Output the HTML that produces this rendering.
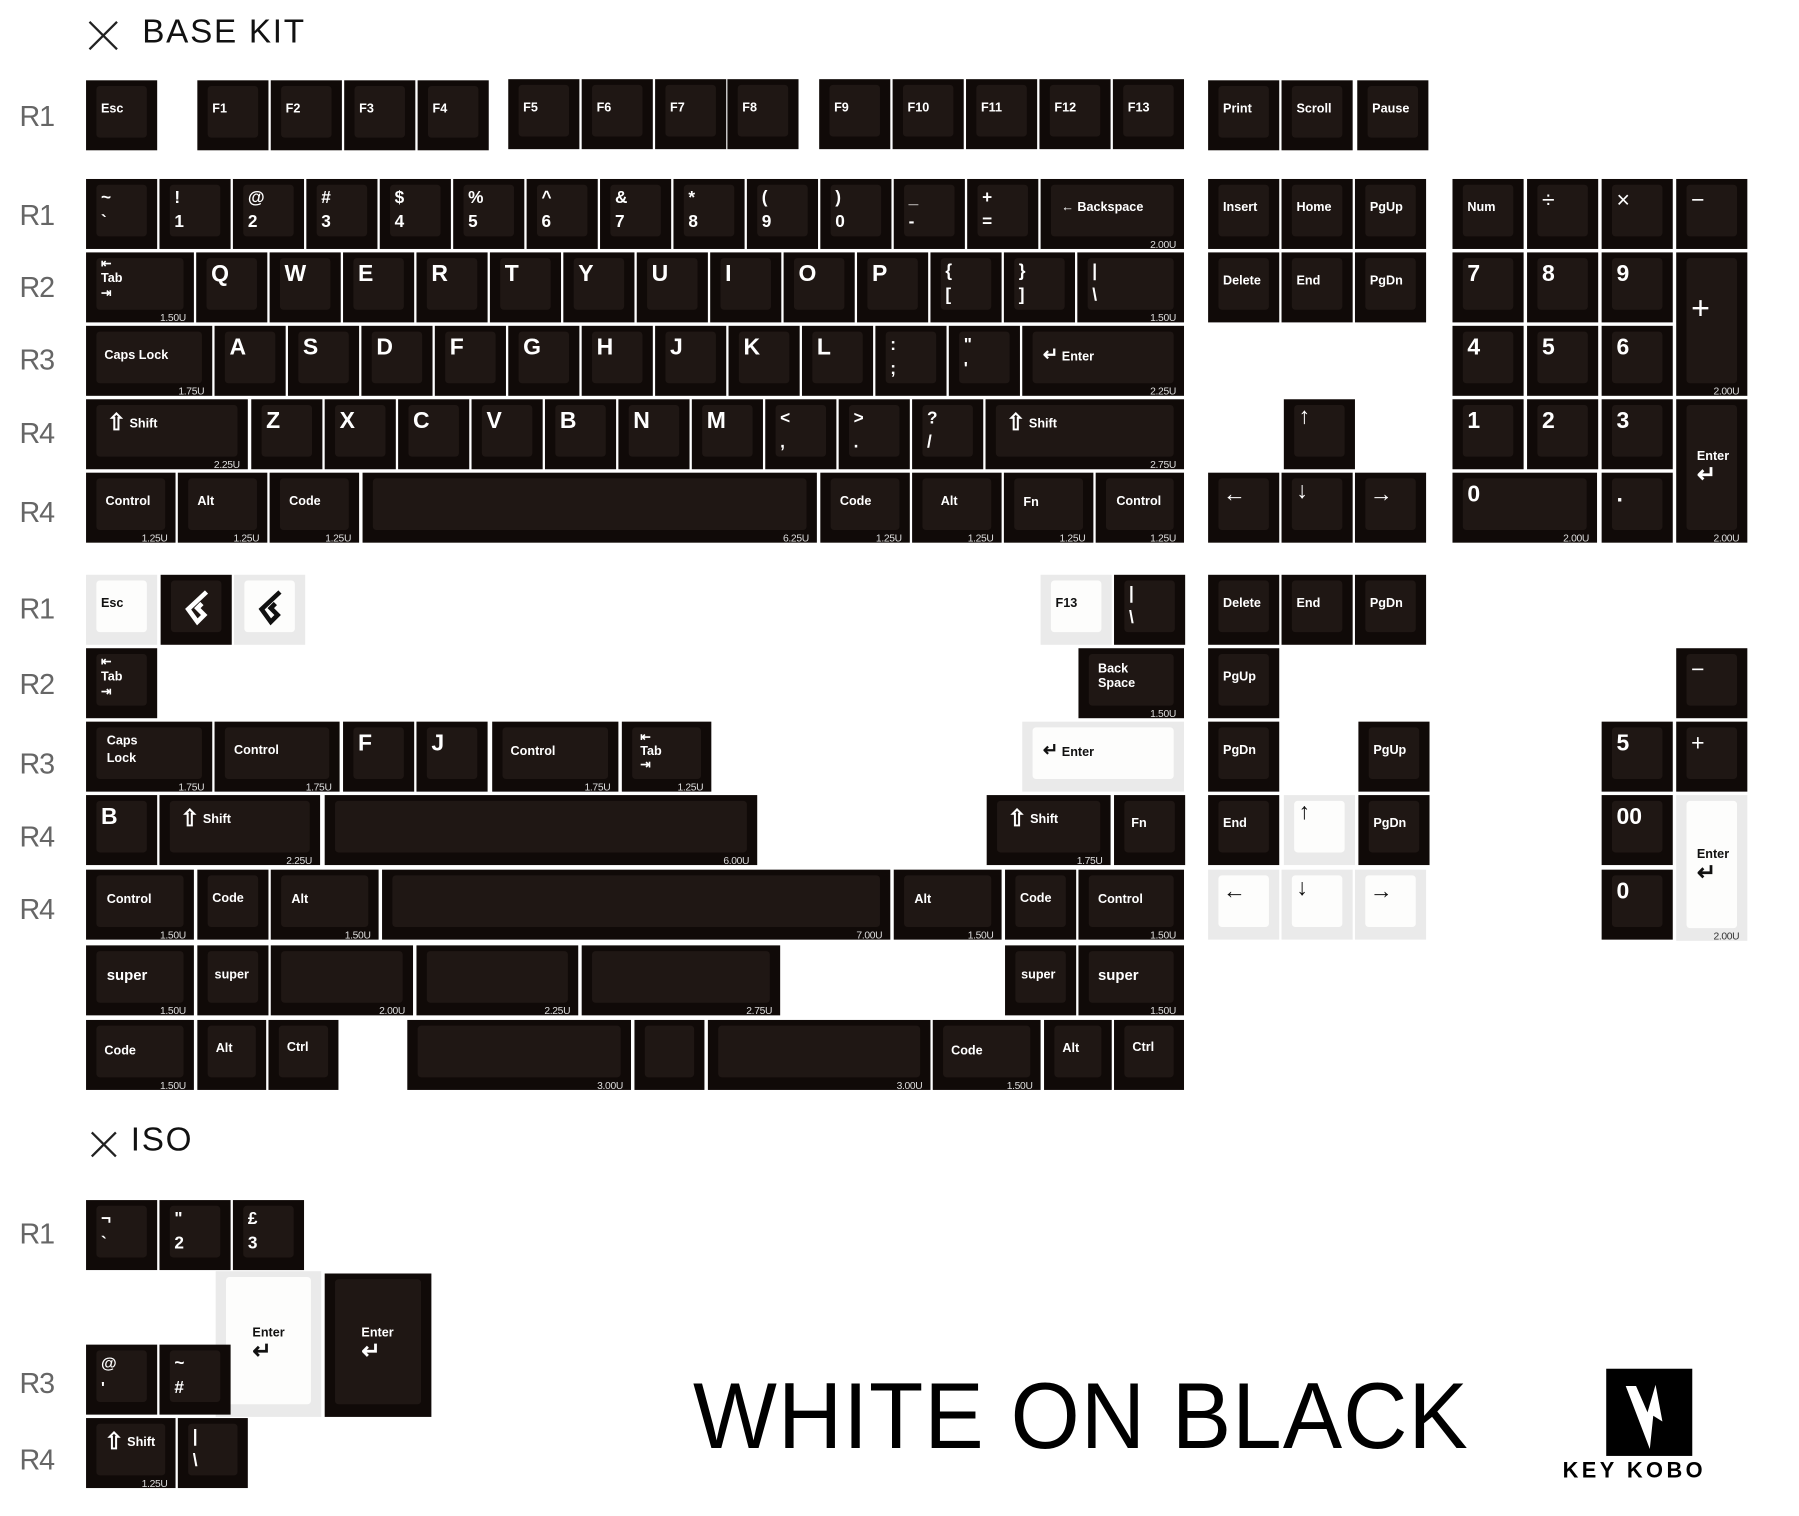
<!DOCTYPE html>
<html><head><meta charset="utf-8"><style>
html,body{margin:0;padding:0;background:#fff;overflow:hidden}
#c{position:relative;width:1568px;height:1322px;transform:scale(1.1473);transform-origin:0 0;font-family:"Liberation Sans",sans-serif}
.k{position:absolute;width:62px;height:61px;background:#100a08;color:#fff;font-weight:bold}
.k:before{content:"";position:absolute;left:9px;top:5px;right:9px;bottom:11px;background:#1f1714;border-radius:3px}
.w{background:#eaeaea;color:#111}
.w:before{background:#fdfdfc}
.k span{position:absolute;left:13px;top:19px;font-size:11px;white-space:nowrap;line-height:13px}
.k .a{font-size:20px;top:8px;left:13px;line-height:22px}
.k .d{font-size:15px;top:6px;line-height:21px}
.k u{position:absolute;right:7px;bottom:-1px;font-size:9px;font-weight:normal;text-decoration:none;color:#ddd;letter-spacing:-.3px}
.l{position:absolute;left:17px;font-size:25px;color:#666;font-weight:normal;letter-spacing:-1px}
.t{position:absolute;font-size:29px;letter-spacing:1.5px;color:#111}
</style></head><body><div id="c">
<svg style="position:absolute;left:76px;top:17px" width="28" height="28"><path d="M2 2L26 26M26 2L2 26" stroke="#222" stroke-width="2"/></svg>
<div class="t" style="left:124px;top:12px">BASE KIT</div>
<div class="l" style="top:88px">R1</div><div class="l" style="top:174px">R1</div><div class="l" style="top:237px">R2</div><div class="l" style="top:300px">R3</div><div class="l" style="top:364px">R4</div><div class="l" style="top:433px">R4</div>
<div class="l" style="top:517px">R1</div><div class="l" style="top:583px">R2</div><div class="l" style="top:652px">R3</div><div class="l" style="top:716px">R4</div><div class="l" style="top:779px">R4</div>
<div class="l" style="top:1062px">R1</div><div class="l" style="top:1192px">R3</div><div class="l" style="top:1259px">R4</div>

<!-- F row -->
<div class="k" style="left:75px;top:70px"><span>Esc</span></div>
<div class="k" style="left:172px;top:70px"><span>F1</span></div><div class="k" style="left:236px;top:70px"><span>F2</span></div><div class="k" style="left:300px;top:70px"><span>F3</span></div><div class="k" style="left:364px;top:70px"><span>F4</span></div>
<div class="k" style="left:443px;top:69px"><span>F5</span></div><div class="k" style="left:507px;top:69px"><span>F6</span></div><div class="k" style="left:571px;top:69px"><span>F7</span></div><div class="k" style="left:634px;top:69px"><span>F8</span></div>
<div class="k" style="left:714px;top:69px"><span>F9</span></div><div class="k" style="left:778px;top:69px"><span>F10</span></div><div class="k" style="left:842px;top:69px"><span>F11</span></div><div class="k" style="left:906px;top:69px"><span>F12</span></div><div class="k" style="left:970px;top:69px"><span>F13</span></div>
<div class="k" style="left:1053px;top:70px"><span>Print</span></div><div class="k" style="left:1117px;top:70px"><span>Scroll</span></div><div class="k" style="left:1183px;top:70px"><span>Pause</span></div>

<!-- row 1 -->
<div class="k" style="left:75px;top:156px"><span class="d">~<br>`</span></div>
<div class="k" style="left:139px;top:156px"><span class="d">!<br>1</span></div>
<div class="k" style="left:203px;top:156px"><span class="d">@<br>2</span></div>
<div class="k" style="left:267px;top:156px"><span class="d">#<br>3</span></div>
<div class="k" style="left:331px;top:156px"><span class="d">$<br>4</span></div>
<div class="k" style="left:395px;top:156px"><span class="d">%<br>5</span></div>
<div class="k" style="left:459px;top:156px"><span class="d">^<br>6</span></div>
<div class="k" style="left:523px;top:156px"><span class="d">&amp;<br>7</span></div>
<div class="k" style="left:587px;top:156px"><span class="d">*<br>8</span></div>
<div class="k" style="left:651px;top:156px"><span class="d">(<br>9</span></div>
<div class="k" style="left:715px;top:156px"><span class="d">)<br>0</span></div>
<div class="k" style="left:779px;top:156px"><span class="d">_<br>-</span></div>
<div class="k" style="left:843px;top:156px"><span class="d">+<br>=</span></div>
<div class="k" style="left:907px;top:156px;width:125px"><span style="left:18px">&#8592; Backspace</span><u>2.00U</u></div>
<div class="k" style="left:1053px;top:156px"><span>Insert</span></div><div class="k" style="left:1117px;top:156px"><span>Home</span></div><div class="k" style="left:1181px;top:156px"><span>PgUp</span></div>
<div class="k" style="left:1266px;top:156px"><span>Num</span></div><div class="k" style="left:1331px;top:156px"><span class="a" style="font-weight:normal">&#247;</span></div><div class="k" style="left:1396px;top:156px"><span class="a" style="font-weight:normal">&#215;</span></div><div class="k" style="left:1461px;top:156px"><span class="a" style="font-weight:normal">&#8722;</span></div>

<!-- row 2 -->
<div class="k" style="left:75px;top:220px;width:94px"><span style="top:4px;line-height:13px">&#8676;<br>Tab<br>&#8677;</span><u>1.50U</u></div>
<div class="k" style="left:171px;top:220px"><span class="a">Q</span></div><div class="k" style="left:235px;top:220px"><span class="a">W</span></div><div class="k" style="left:299px;top:220px"><span class="a">E</span></div><div class="k" style="left:363px;top:220px"><span class="a">R</span></div><div class="k" style="left:427px;top:220px"><span class="a">T</span></div><div class="k" style="left:491px;top:220px"><span class="a">Y</span></div><div class="k" style="left:555px;top:220px"><span class="a">U</span></div><div class="k" style="left:619px;top:220px"><span class="a">I</span></div><div class="k" style="left:683px;top:220px"><span class="a">O</span></div><div class="k" style="left:747px;top:220px"><span class="a">P</span></div>
<div class="k" style="left:811px;top:220px"><span class="d">{<br>[</span></div><div class="k" style="left:875px;top:220px"><span class="d">}<br>]</span></div>
<div class="k" style="left:939px;top:220px;width:93px"><span class="d">|<br>\</span><u>1.50U</u></div>
<div class="k" style="left:1053px;top:220px"><span>Delete</span></div><div class="k" style="left:1117px;top:220px"><span>End</span></div><div class="k" style="left:1181px;top:220px"><span>PgDn</span></div>
<div class="k" style="left:1266px;top:220px"><span class="a">7</span></div><div class="k" style="left:1331px;top:220px"><span class="a">8</span></div><div class="k" style="left:1396px;top:220px"><span class="a">9</span></div>
<div class="k" style="left:1461px;top:220px;height:125px"><span class="a" style="top:38px;font-size:28px;font-weight:normal">+</span><u>2.00U</u></div>

<!-- row 3 -->
<div class="k" style="left:75px;top:284px;width:110px"><span style="left:16px;top:20px">Caps Lock</span><u>1.75U</u></div>
<div class="k" style="left:187px;top:284px"><span class="a">A</span></div><div class="k" style="left:251px;top:284px"><span class="a">S</span></div><div class="k" style="left:315px;top:284px"><span class="a">D</span></div><div class="k" style="left:379px;top:284px"><span class="a">F</span></div><div class="k" style="left:443px;top:284px"><span class="a">G</span></div><div class="k" style="left:507px;top:284px"><span class="a">H</span></div><div class="k" style="left:571px;top:284px"><span class="a">J</span></div><div class="k" style="left:635px;top:284px"><span class="a">K</span></div><div class="k" style="left:699px;top:284px"><span class="a">L</span></div>
<div class="k" style="left:763px;top:284px"><span class="d">:<br>;</span></div><div class="k" style="left:827px;top:284px"><span class="d">"<br>'</span></div>
<div class="k" style="left:891px;top:284px;width:141px"><span style="left:18px"><b style="font-size:16px">&#8629;</b> Enter</span><u>2.25U</u></div>
<div class="k" style="left:1266px;top:284px"><span class="a">4</span></div><div class="k" style="left:1331px;top:284px"><span class="a">5</span></div><div class="k" style="left:1396px;top:284px"><span class="a">6</span></div>

<!-- row 4 -->
<div class="k" style="left:75px;top:348px;width:141px"><span style="left:18px;top:15px;font-size:11px"><b style="font-size:20px;vertical-align:middle">&#8679;</b> Shift</span><u>2.25U</u></div>
<div class="k" style="left:219px;top:348px"><span class="a">Z</span></div><div class="k" style="left:283px;top:348px"><span class="a">X</span></div><div class="k" style="left:347px;top:348px"><span class="a">C</span></div><div class="k" style="left:411px;top:348px"><span class="a">V</span></div><div class="k" style="left:475px;top:348px"><span class="a">B</span></div><div class="k" style="left:539px;top:348px"><span class="a">N</span></div><div class="k" style="left:603px;top:348px"><span class="a">M</span></div>
<div class="k" style="left:667px;top:348px"><span class="d">&lt;<br>,</span></div><div class="k" style="left:731px;top:348px"><span class="d">&gt;<br>.</span></div><div class="k" style="left:795px;top:348px"><span class="d">?<br>/</span></div>
<div class="k" style="left:859px;top:348px;width:173px"><span style="left:18px;top:15px"><b style="font-size:20px;vertical-align:middle">&#8679;</b> Shift</span><u>2.75U</u></div>
<div class="k" style="left:1119px;top:348px"><span class="a" style="top:4px">&#8593;</span></div>
<div class="k" style="left:1266px;top:348px"><span class="a">1</span></div><div class="k" style="left:1331px;top:348px"><span class="a">2</span></div><div class="k" style="left:1396px;top:348px"><span class="a">3</span></div>
<div class="k" style="left:1461px;top:348px;height:125px"><span style="left:18px;top:42px;line-height:16px">Enter<br><b style="font-size:20px">&#8629;</b></span><u>2.00U</u></div>

<!-- row 5 -->
<div class="k" style="left:75px;top:412px;width:78px"><span style="left:17px">Control</span><u>1.25U</u></div>
<div class="k" style="left:155px;top:412px;width:78px"><span style="left:17px">Alt</span><u>1.25U</u></div>
<div class="k" style="left:235px;top:412px;width:78px"><span style="left:17px">Code</span><u>1.25U</u></div>
<div class="k" style="left:316px;top:412px;width:396px"><u>6.25U</u></div>
<div class="k" style="left:715px;top:412px;width:78px"><span style="left:17px">Code</span><u>1.25U</u></div>
<div class="k" style="left:795px;top:412px;width:78px"><span style="left:25px">Alt</span><u>1.25U</u></div>
<div class="k" style="left:875px;top:412px;width:78px"><span style="left:17px;top:20px">Fn</span><u>1.25U</u></div>
<div class="k" style="left:955px;top:412px;width:77px"><span style="left:18px">Control</span><u>1.25U</u></div>
<div class="k" style="left:1053px;top:412px"><span class="a">&#8592;</span></div><div class="k" style="left:1117px;top:412px"><span class="a" style="top:5px">&#8595;</span></div><div class="k" style="left:1181px;top:412px"><span class="a">&#8594;</span></div>
<div class="k" style="left:1266px;top:412px;width:126px"><span class="a">0</span><u>2.00U</u></div>
<div class="k" style="left:1396px;top:412px"><span class="a">.</span></div>

<!-- section 2 -->
<div class="k w" style="left:75px;top:501px"><span>Esc</span></div>
<div class="k" style="left:140px;top:501px"><svg style="position:absolute;left:18px;top:13px" width="28" height="32"><path d="M22 2L6 17L14 28L20 22L14 16L18 12" fill="none" stroke="#fff" stroke-width="4"/></svg></div>
<div class="k w" style="left:204px;top:501px"><svg style="position:absolute;left:18px;top:13px" width="28" height="32"><path d="M22 2L6 17L14 28L20 22L14 16L18 12" fill="none" stroke="#111" stroke-width="4"/></svg></div>
<div class="k w" style="left:907px;top:501px"><span>F13</span></div>
<div class="k" style="left:971px;top:501px"><span class="d">|<br>\</span></div>
<div class="k" style="left:1053px;top:501px"><span>Delete</span></div><div class="k" style="left:1117px;top:501px"><span>End</span></div><div class="k" style="left:1181px;top:501px"><span>PgDn</span></div>

<div class="k" style="left:75px;top:565px"><span style="top:6px">&#8676;<br>Tab<br>&#8677;</span></div>
<div class="k" style="left:940px;top:565px;width:92px"><span style="left:17px;top:12px">Back<br>Space</span><u>1.50U</u></div>
<div class="k" style="left:1053px;top:565px"><span>PgUp</span></div>
<div class="k" style="left:1461px;top:565px"><span class="a" style="font-weight:normal">&#8722;</span></div>

<div class="k" style="left:75px;top:629px;width:110px"><span style="left:18px;top:10px;line-height:15px">Caps<br>Lock</span><u>1.75U</u></div>
<div class="k" style="left:187px;top:629px;width:109px"><span style="left:17px;top:19px">Control</span><u>1.75U</u></div>
<div class="k" style="left:299px;top:629px"><span class="a">F</span></div><div class="k" style="left:363px;top:629px"><span class="a">J</span></div>
<div class="k" style="left:429px;top:629px;width:110px"><span style="left:16px;top:20px">Control</span><u>1.75U</u></div>
<div class="k" style="left:542px;top:629px;width:78px"><span style="left:16px;top:8px;line-height:12px">&#8676;<br>Tab<br>&#8677;</span><u>1.25U</u></div>
<div class="k w" style="left:891px;top:629px;width:141px"><span style="left:18px"><b style="font-size:16px">&#8629;</b> Enter</span></div>
<div class="k" style="left:1053px;top:629px"><span>PgDn</span></div><div class="k" style="left:1184px;top:629px"><span>PgUp</span></div>
<div class="k" style="left:1396px;top:629px"><span class="a">5</span></div><div class="k" style="left:1461px;top:629px"><span class="a" style="font-weight:normal">+</span></div>

<div class="k" style="left:75px;top:693px"><span class="a">B</span></div>
<div class="k" style="left:139px;top:693px;width:140px"><span style="left:18px;top:15px"><b style="font-size:20px;vertical-align:middle">&#8679;</b> Shift</span><u>2.25U</u></div>
<div class="k" style="left:283px;top:693px;width:377px"><u>6.00U</u></div>
<div class="k" style="left:860px;top:693px;width:108px"><span style="left:18px;top:15px"><b style="font-size:20px;vertical-align:middle">&#8679;</b> Shift</span><u>1.75U</u></div>
<div class="k" style="left:971px;top:693px"><span style="left:15px">Fn</span></div>
<div class="k" style="left:1053px;top:693px"><span>End</span></div>
<div class="k w" style="left:1119px;top:693px"><span class="a" style="top:4px">&#8593;</span></div>
<div class="k" style="left:1184px;top:693px"><span>PgDn</span></div>
<div class="k" style="left:1396px;top:693px"><span class="a">00</span></div>
<div class="k w" style="left:1461px;top:693px;height:127px"><span style="left:18px;top:44px;line-height:16px">Enter<br><b style="font-size:20px">&#8629;</b></span><u style="color:#333">2.00U</u></div>

<div class="k" style="left:75px;top:758px;width:94px"><span style="left:18px;top:20px">Control</span><u>1.50U</u></div>
<div class="k" style="left:172px;top:758px"><span>Code</span></div>
<div class="k" style="left:236px;top:758px;width:94px"><span style="left:18px;top:20px">Alt</span><u>1.50U</u></div>
<div class="k" style="left:333px;top:758px;width:443px"><u>7.00U</u></div>
<div class="k" style="left:779px;top:758px;width:94px"><span style="left:18px;top:20px">Alt</span><u>1.50U</u></div>
<div class="k" style="left:876px;top:758px"><span>Code</span></div>
<div class="k" style="left:940px;top:758px;width:92px"><span style="left:17px;top:20px">Control</span><u>1.50U</u></div>
<div class="k w" style="left:1053px;top:758px"><span class="a">&#8592;</span></div><div class="k w" style="left:1117px;top:758px"><span class="a" style="top:5px">&#8595;</span></div><div class="k w" style="left:1181px;top:758px"><span class="a">&#8594;</span></div>
<div class="k" style="left:1396px;top:758px"><span class="a">0</span></div>

<div class="k" style="left:75px;top:824px;width:94px"><span style="left:18px;top:19px;font-size:13px">super</span><u>1.50U</u></div>
<div class="k" style="left:172px;top:824px"><span style="left:15px;top:20px">super</span></div>
<div class="k" style="left:236px;top:824px;width:124px"><u>2.00U</u></div>
<div class="k" style="left:363px;top:824px;width:141px"><u>2.25U</u></div>
<div class="k" style="left:507px;top:824px;width:173px"><u>2.75U</u></div>
<div class="k" style="left:876px;top:824px"><span style="left:14px;top:20px">super</span></div>
<div class="k" style="left:940px;top:824px;width:92px"><span style="left:17px;top:19px;font-size:13px">super</span><u>1.50U</u></div>

<div class="k" style="left:75px;top:889px;width:94px"><span style="left:16px;top:21px">Code</span><u>1.50U</u></div>
<div class="k" style="left:172px;top:889px;width:60px"><span style="left:16px">Alt</span></div>
<div class="k" style="left:234px;top:889px;width:61px"><span style="left:16px;top:18px">Ctrl</span></div>
<div class="k" style="left:355px;top:889px;width:195px"><u>3.00U</u></div>
<div class="k" style="left:553px;top:889px;width:61px"></div>
<div class="k" style="left:617px;top:889px;width:194px"><u>3.00U</u></div>
<div class="k" style="left:813px;top:889px;width:94px"><span style="left:16px;top:21px">Code</span><u>1.50U</u></div>
<div class="k" style="left:910px;top:889px;width:59px"><span style="left:16px">Alt</span></div>
<div class="k" style="left:971px;top:889px;width:61px"><span style="left:16px;top:18px">Ctrl</span></div>

<!-- ISO -->
<svg style="position:absolute;left:78px;top:985px" width="25" height="25"><path d="M2 2L23 23M23 2L2 23" stroke="#222" stroke-width="2"/></svg>
<div class="t" style="left:114px;top:978px">ISO</div>
<div class="k" style="left:75px;top:1046px"><span class="d">&#172;<br>`</span></div>
<div class="k" style="left:139px;top:1046px"><span class="d">"<br>2</span></div>
<div class="k" style="left:203px;top:1046px"><span class="d">&#163;<br>3</span></div>
<div class="k w" style="left:188px;top:1108px;width:92px;height:127px"><span style="left:32px;top:46px;line-height:16px">Enter<br><b style="font-size:20px">&#8629;</b></span></div>
<div class="k" style="left:283px;top:1110px;width:93px;height:125px"><span style="left:32px;top:44px;line-height:16px">Enter<br><b style="font-size:20px">&#8629;</b></span></div>
<div class="k" style="left:75px;top:1172px"><span class="d" style="font-size:14px">@<br>'</span></div>
<div class="k" style="left:139px;top:1172px"><span class="d">~<br>#</span></div>
<div class="k" style="left:75px;top:1236px;width:78px"><span style="left:16px;top:15px"><b style="font-size:20px;vertical-align:middle">&#8679;</b> Shift</span><u>1.25U</u></div>
<div class="k" style="left:155px;top:1236px;width:61px"><span class="d">|<br>\</span></div>

<div style="position:absolute;left:604px;top:1190px;font-size:82px;font-weight:normal;letter-spacing:1px;color:#000;line-height:90px;transform:scaleX(0.945);transform-origin:0 0">WHITE ON BLACK</div>
<div style="position:absolute;left:1400px;top:1193px;width:75px;height:76px;background:#000"></div>
<svg style="position:absolute;left:1400px;top:1193px" width="75" height="76"><path d="M17 15L26 15L36 38L43 14L49 46L41 41L38 70Z" fill="#fff"/></svg>
<div style="position:absolute;left:1362px;top:1272px;font-size:19px;font-weight:bold;letter-spacing:3px;color:#000">KEY KOBO</div>
</div></body></html>
